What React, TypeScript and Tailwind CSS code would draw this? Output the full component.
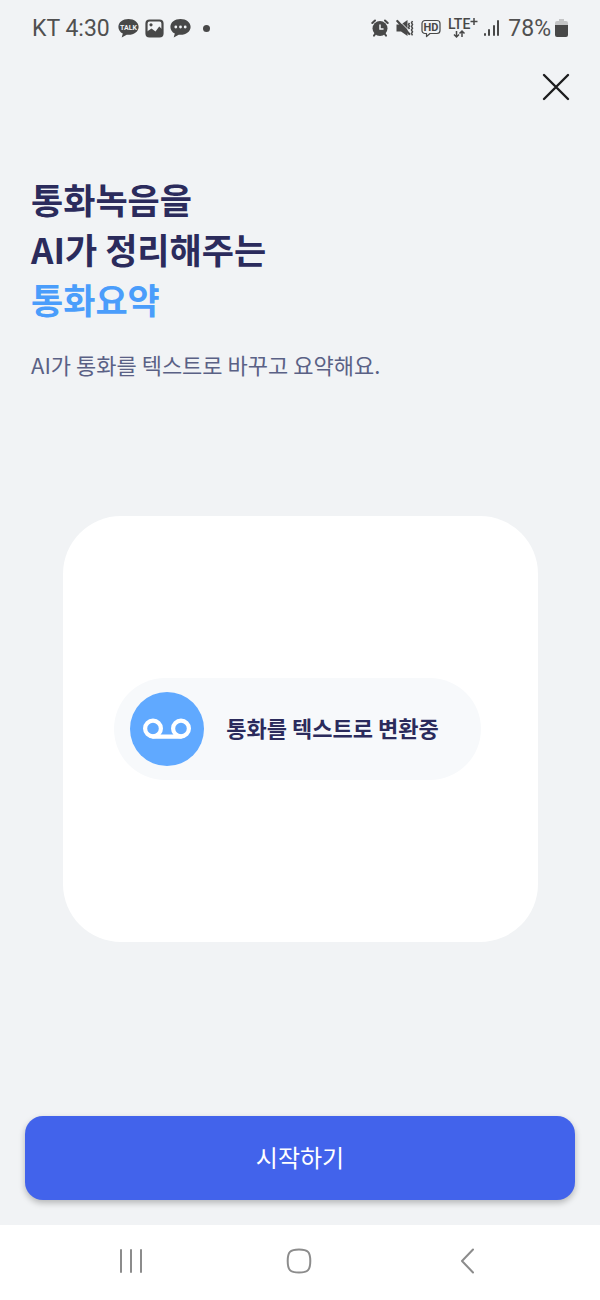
import React from 'react';

const BubbleIcon = ({ children }: { children: React.ReactNode }) => (
  <svg width="21" height="20" viewBox="0 0 21 20" fill="#484848">
    <path d="M10.5 1C4.8 1 .4 4.2.4 8.900c0 2.900 1.700 5.200 4.400 6.600l-1.100 3.900 5-2.700c.6.1 1.200.1 1.800.1 5.700 0 10.100-3.500 10.100-7.900S16.200 1 10.500 1Z" />
    {children}
  </svg>
);

const PictureIcon = () => (
  <svg width="19" height="19" viewBox="0 0 19 19">
    <rect x="1.500" y="1.500" width="16" height="16" rx="3" fill="none" stroke="#484848" strokeWidth="2.200" />
    <path d="M2 12.500 6.500 9.500l4 3 3.700-5 3.800 3.500v4.500a2 2 0 0 1-2 2H3a1.500 1.500 0 0 1-1.500-1.500Z" fill="#484848" />
    <circle cx="6" cy="5.800" r="1.600" fill="#484848" />
  </svg>
);

const AlarmIcon = () => (
  <svg width="18" height="18" viewBox="0 0 18 18" fill="none" stroke="#484848" strokeLinecap="round">
    <circle cx="9" cy="9.500" r="7.500" fill="#484848" stroke="none" />
    <path d="M1.300 4 4 1.500M16.700 4 14 1.500" strokeWidth="2" />
    <path d="M4.500 14.500 3 16.600M13.500 14.500l1.500 2.100" strokeWidth="2" />
    <path d="M9 6v4h3" stroke="#f1f3f5" strokeWidth="1.500" />
  </svg>
);

const VibrateMuteIcon = () => (
  <svg width="18" height="18" viewBox="0 0 18 18" fill="none" stroke="#484848">
    <path d="M.5 5.500H5L11.500 1v16L5 12.500H.5Z" fill="#484848" stroke="none" />
    <path d="M3 1.500 14 12.500" stroke="#f1f3f5" strokeWidth="1" />
    <path d="M1.300 2l12 13" strokeWidth="2.200" strokeLinecap="round" />
    <path d="M13.500 4l-1 1.500 1 1.500-1 1.500 1 1.500M16.500 2l-1 1.800 1 1.800-1 1.800 1 1.800-1 1.800 1 1.800-1 1.800 1 1.800" strokeWidth="1.500" />
  </svg>
);

const HdIcon = () => (
  <svg width="20" height="19" viewBox="0 0 20 19" fill="none" stroke="#484848">
    <path d="M4 1.500h12a3 3 0 0 1 3 3v7a3 3 0 0 1-3 3H9l-3.500 3v-3H4a3 3 0 0 1-3-3v-7a3 3 0 0 1 3-3Z" strokeWidth="1.200" strokeLinejoin="round" />
    <text x="10" y="12" textAnchor="middle" fontSize="11" fontWeight="700" fontFamily="Roboto, sans-serif" fill="#484848" stroke="none">HD</text>
  </svg>
);

const LteIcon = () => (
  <svg width="32" height="22" viewBox="0 0 32 22" fill="none" stroke="#484848">
    <text x="0" y="12" fontSize="14" fontWeight="500" fontFamily="Roboto, sans-serif" fill="#484848" stroke="none">LTE</text>
    <path d="M26 1v7M22.500 4.500h7" strokeWidth="1.500" />
    <path d="M8.500 14v6M6 17.500 8.500 20l2.500-2.500M14 20v-6M11.500 16.500 14 14l2.500 2.500" strokeWidth="1.500" />
  </svg>
);

const SignalIcon = () => (
  <svg width="16" height="17" viewBox="0 0 16 17" fill="#484848">
    <rect x="0" y="13" width="2" height="3" rx="1" />
    <rect x="4" y="9" width="2" height="7" rx="1" />
    <rect x="9" y="5" width="2" height="11" rx="1" />
    <rect x="13" y="0" width="2" height="16" rx="1" />
  </svg>
);

const BatteryIcon = () => (
  <svg width="13" height="18" viewBox="0 0 13 18">
    <path d="M4 0h5v2h2a2 2 0 0 1 2 2v3H0V4a2 2 0 0 1 2-2h2Z" fill="#c4c5c6" />
    <path d="M0 6h13v10a2 2 0 0 1-2 2H2a2 2 0 0 1-2-2Z" fill="#484848" />
  </svg>
);

const StatusBar = () => (
  <div className="flex h-14 items-center justify-between px-8 font-['Roboto',sans-serif] text-[23px] leading-none text-[#505050]">
    <div className="flex items-center gap-2">
      <span>KT 4:30</span>
      <div className="flex items-center gap-[6px]">
        <BubbleIcon>
          <text x="10.500" y="11.500" textAnchor="middle" fontSize="7" fontWeight="700" fontFamily="Roboto, sans-serif" fill="#f1f3f5">TALK</text>
        </BubbleIcon>
        <PictureIcon />
        <BubbleIcon>
          <circle cx="5.800" cy="9" r="1.400" fill="#f1f3f5" />
          <circle cx="10.500" cy="9" r="1.400" fill="#f1f3f5" />
          <circle cx="15.200" cy="9" r="1.400" fill="#f1f3f5" />
        </BubbleIcon>
      </div>
      <span className="ml-1 size-[7px] rounded-full bg-[#484848]" />
    </div>
    <div className="flex items-center gap-1">
      <div className="flex items-center gap-[7px]">
        <AlarmIcon />
        <VibrateMuteIcon />
        <HdIcon />
        <LteIcon />
      </div>
      <SignalIcon />
      <div className="flex items-center gap-1 pl-1">
        <span>78%</span>
        <BatteryIcon />
      </div>
    </div>
  </div>
);

const VoicemailIcon = () => (
  <svg width="50" height="24" viewBox="0 0 50 24" fill="none" stroke="#fff" strokeWidth="4.200">
    <circle cx="11" cy="11.500" r="7.900" />
    <circle cx="39" cy="11.500" r="7.900" />
    <path d="M11 19.700h28" strokeLinecap="round" />
  </svg>
);

const NavBar = () => (
  <nav className="grid h-[75px] grid-cols-3 items-center bg-white pb-1 pl-[46px] pr-12 text-[#8c8c8c]">
    <button type="button" aria-label="최근 앱" className="flex h-12 items-center justify-center">
      <svg width="26" height="28" viewBox="0 0 26 28" stroke="currentColor" strokeWidth="2" strokeLinecap="round">
        <path d="M4 3v22M14 3v22M24 3v22" />
      </svg>
    </button>
    <button type="button" aria-label="홈" className="flex h-12 items-center justify-center">
      <svg width="28" height="28" viewBox="0 0 28 28" fill="none" stroke="currentColor" strokeWidth="2">
        <path d="M14 2.500c9 0 11.300 2.500 11.300 11.500S23 25.500 14 25.500 2.700 23 2.700 14 5 2.500 14 2.500Z" />
      </svg>
    </button>
    <button type="button" aria-label="뒤로" className="flex h-12 items-center justify-center">
      <svg width="16" height="28" viewBox="0 0 16 28" fill="none" stroke="currentColor" strokeWidth="2" strokeLinecap="round" strokeLinejoin="round">
        <path d="M13 2.500 2 14l11 11.500" />
      </svg>
    </button>
  </nav>
);

export default function App() {
  return (
    <div className="flex min-h-screen flex-col bg-[#f1f3f5] font-['Noto_Sans_CJK_KR',sans-serif]">
      <StatusBar />

      <header className="flex justify-end px-6 pt-[11px]">
        <button type="button" aria-label="닫기" className="flex size-10 items-center justify-center">
          <svg width="28" height="28" viewBox="0 0 28 28" stroke="#1c1c1e" strokeWidth="2.400" strokeLinecap="round">
            <path d="M2 2l24 24M26 2 2 26" />
          </svg>
        </button>
      </header>

      <main className="flex flex-1 flex-col pt-[67px]">
        <div className="px-[31px]">
          <h1 className="text-[35px] font-bold leading-[50px] text-[#2b2b5c]">
            통화녹음을
            <br />
            AI가 정리해주는
            <br />
            <span className="text-[#4a9dfb]">통화요약</span>
          </h1>
          <p className="mt-6 text-[22px] leading-8 text-[#5a6185]">AI가 통화를 텍스트로 바꾸고 요약해요.</p>
        </div>

        {/* Conversion preview */}
        <div className="mb-[174px] ml-[63px] mr-[62px] mt-[136px] flex items-center justify-center rounded-[58px] bg-white py-[162px] pr-[6px]">
          <div className="flex items-center gap-[22px] rounded-full bg-[#f7f9fb] py-[14px] pl-4 pr-[42px]">
            <div className="flex size-[74px] items-center justify-center rounded-full bg-[#60a9ff]">
              <VoicemailIcon />
            </div>
            <span className="pb-1 text-[22px] font-bold leading-8 text-[#2b2b5c]">통화를 텍스트로 변환중</span>
          </div>
        </div>
      </main>

      <div className="px-[25px] pb-[25px]">
        <button type="button" className="h-[84px] w-full rounded-[18px] bg-[#4263eb] pb-[2px] text-2xl text-white shadow-[0_3px_6px_rgba(0,0,0,0.25)]">
          시작하기
        </button>
      </div>

      <NavBar />
    </div>
  );
}
